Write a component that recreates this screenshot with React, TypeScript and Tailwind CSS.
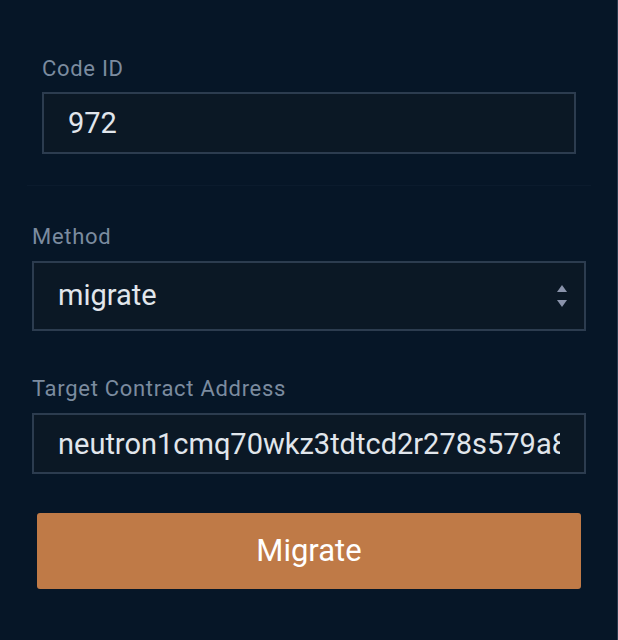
import React from "react";

const ADDRESS = "neutron1cmq70wkz3tdtcd2r278s579a8xmf5ztr7g0yhk4jt3xq9qfl6nzsyuh2wa";

function Label({ children }: { children: React.ReactNode }) {
  return (
    <label className="block text-[22px] leading-[25px] tracking-[0.7px] text-[#7b8b9f]">
      {children}
    </label>
  );
}

export default function App() {
  return (
    <div className="w-[618px] h-[640px] bg-[#061627] border-r border-[#2a3a4e] font-['Roboto',sans-serif] overflow-hidden">
      <div className="flex flex-col pl-[32px] pr-[31px] pt-[56px]">
        {/* Code ID */}
        <div className="flex flex-col gap-[11px] px-[10px]">
          <Label>Code ID</Label>
          <input
            readOnly
            defaultValue="972"
            className="h-[62px] w-full bg-[#0b1825] border-2 border-[#2c3c4f] pl-[24px] pr-[24px] text-[29px] text-[#e1e6ec] outline-none font-['Roboto',sans-serif]"
          />
        </div>

        <div className="mt-[31px] mx-[-5px] h-px bg-[#0b1b2d]" />

        {/* Method */}
        <div className="mt-[38px] flex flex-col gap-[12px]">
          <Label>Method</Label>
          <div className="h-[70px] bg-[#0b1825] border-2 border-[#2c3c4f] flex items-center pl-[24px] pr-[17px]">
            <span className="text-[29px] text-[#e1e6ec]">migrate</span>
            <svg
              className="ml-auto"
              width="10"
              height="22"
              viewBox="0 0 10 22"
              fill="#8a93ab"
            >
              <polygon points="5,0 10,7 0,7" />
              <polygon points="0,15 10,15 5,22" />
            </svg>
          </div>
        </div>

        {/* Target Contract Address */}
        <div className="mt-[45px] flex flex-col gap-[12px]">
          <Label>Target Contract Address</Label>
          <input
            readOnly
            defaultValue={ADDRESS}
            className="h-[61px] w-full bg-[#0b1825] border-2 border-[#2c3c4f] pl-[24px] pr-[24px] text-[29px] text-[#e1e6ec] outline-none font-['Roboto',sans-serif]"
          />
        </div>

        <div className="mt-[39px] px-[5px]">
          <button className="w-full h-[76px] rounded-[3px] bg-[#bf7a47] text-white text-[31px] font-['Roboto',sans-serif]">
            Migrate
          </button>
        </div>
      </div>
    </div>
  );
}
